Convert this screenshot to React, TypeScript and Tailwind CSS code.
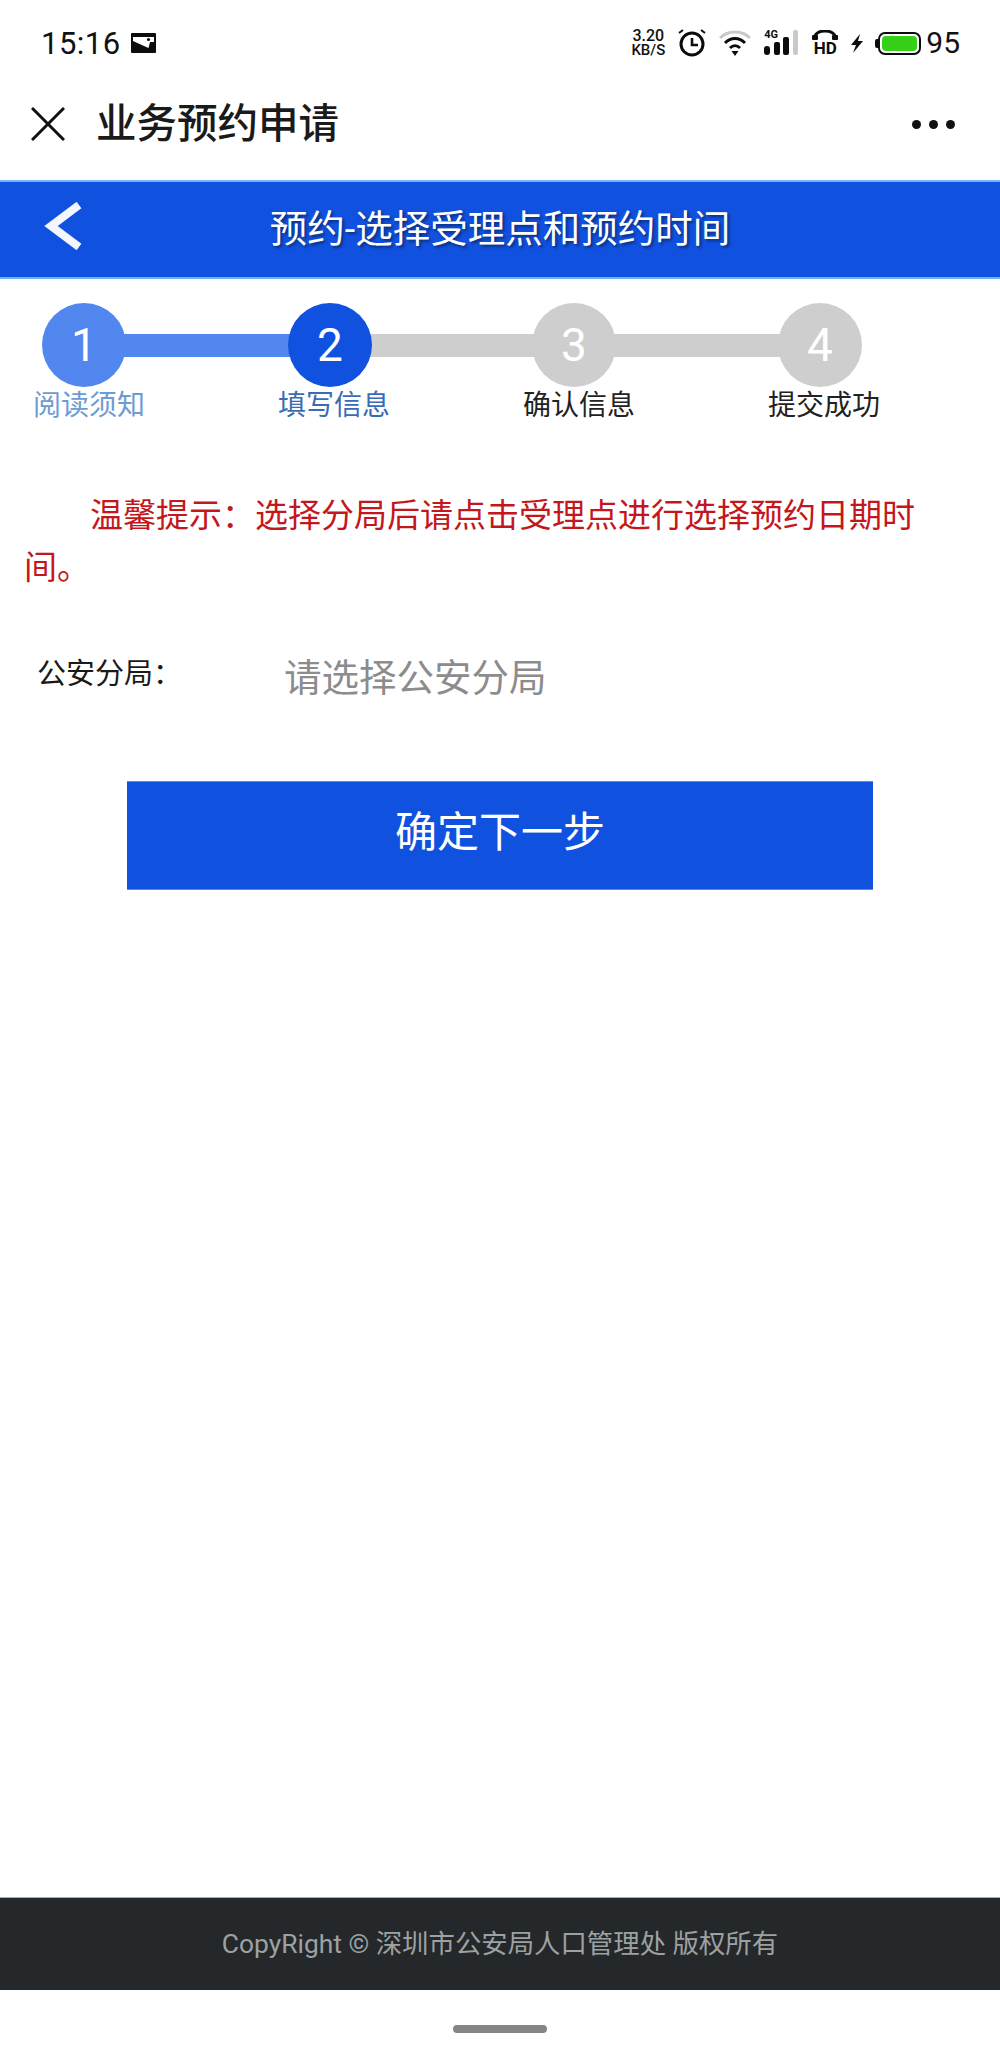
const cjk = "font-['Roboto','Noto_Sans_CJK_SC','Noto_Sans',sans-serif]";

const steps = [
  { n: "1", label: "阅读须知", circle: "bg-[#5287ef]", text: "text-[#6e9bd3]", bar: "" },
  { n: "2", label: "填写信息", circle: "bg-[#1151df]", text: "text-[#3a6bb5]", bar: "w-[174px] bg-[#5287ef]" },
  { n: "3", label: "确认信息", circle: "bg-[#cdcecd]", text: "text-[#222222]", bar: "w-[172px] bg-[#cdcecd]" },
  { n: "4", label: "提交成功", circle: "bg-[#cdcecd]", text: "text-[#222222]", bar: "w-[174px] bg-[#cdcecd]" },
];

function MailIcon() {
  return (
    <svg width="25" height="20" viewBox="0 0 25 20">
      <rect width="25" height="20" rx="1" fill="#0c0c0c" />
      <path d="M2 4 H23 V9 H19 L17.5 15 L13 13 L2 8 Z" fill="#fff" />
      <circle cx="17.5" cy="6.5" r="1.6" fill="#0c0c0c" />
    </svg>
  );
}

function StatusIcons() {
  return (
    <div className="flex items-center">
      <div className="flex flex-col items-center whitespace-nowrap text-[#111] font-['Roboto',sans-serif] font-medium">
        <span className="text-[16px] leading-[14px]">3.20</span>
        <span className="text-[15px] leading-[14px]">KB/S</span>
      </div>
      <svg className="ml-[13px]" width="28" height="28" viewBox="0 0 28 28" fill="none" stroke="#0c0c0c">
        <circle cx="14" cy="15" r="11" strokeWidth="3" />
        <path d="M14 9 V16 H20" strokeWidth="2.6" />
        <path d="M1 4 L5 1 M27 4 L23 1" strokeWidth="2" />
      </svg>
      <svg className="ml-[13px]" width="32" height="26" viewBox="0 0 32 26" fill="none">
        <path d="M1 8 C9 0 23 0 31 8" stroke="#c9c9c9" strokeWidth="3" />
        <path d="M6 13 C12 7 20 7 26 13" stroke="#0c0c0c" strokeWidth="3" />
        <path d="M11 18 C14 15 18 15 21 18" stroke="#0c0c0c" strokeWidth="3" />
        <path d="M12.5 21 L16 26 L19.5 21 Z" fill="#0c0c0c" />
      </svg>
      <div className="relative ml-[13px] h-[26px] w-[34px]">
        <span className="absolute left-0 top-[-1px] text-[11px] font-bold leading-[12px] text-[#0c0c0c] font-['Roboto',sans-serif]">4G</span>
        <svg width="34" height="26" viewBox="0 0 34 26">
          <rect x="0" y="16" width="6" height="9" rx="3" fill="#0c0c0c" />
          <rect x="10" y="12" width="6" height="13" rx="2" fill="#0c0c0c" />
          <rect x="19" y="7" width="6" height="18" rx="2" fill="#0c0c0c" />
          <rect x="29" y="0" width="5" height="25" rx="2" fill="#c9c9c9" />
        </svg>
      </div>
      <div className="ml-[14px] flex w-[26px] flex-col items-center">
        <svg width="26" height="11" viewBox="0 0 26 11" fill="none">
          <path d="M3 9 V7 C3 -1 23 -1 23 7 V9" stroke="#0c0c0c" strokeWidth="3" />
          <rect x="0" y="5" width="6" height="5" rx="1" fill="#0c0c0c" />
          <rect x="20" y="5" width="6" height="5" rx="1" fill="#0c0c0c" />
        </svg>
        <span className="text-[17px] font-bold leading-[15px] text-[#0c0c0c] font-['Roboto',sans-serif]">HD</span>
      </div>
      <svg className="ml-[12px]" width="14" height="19" viewBox="0 0 14 19">
        <path d="M10 0 L1 11 H6 L3 19 L13 7 H8 Z" fill="#0c0c0c" />
      </svg>
      <div className="ml-[11px] flex items-center">
        <div className="h-[9px] w-[3px] rounded-l-[2px] bg-[#0c0c0c]" />
        <div className="flex h-[23px] w-[43px] items-center rounded-[7px] border-2 border-[#0c0c0c] p-[2px]">
          <div className="h-full w-full rounded-[4px] bg-[#35d017]" />
        </div>
      </div>
      <span className="ml-[5px] text-[30px] leading-none text-[#111] font-['Roboto',sans-serif]">95</span>
    </div>
  );
}

export default function App() {
  return (
    <div className={`flex h-[2066px] w-[1000px] flex-col bg-white ${cjk}`}>
      {/* status bar */}
      <div className="flex h-[86px] items-center justify-between pl-[41px] pr-[40px]">
        <div className="flex items-center gap-[10px]">
          <span className="text-[31px] leading-none tracking-[0.5px] text-[#111]">15:16</span>
          <MailIcon />
        </div>
        <StatusIcons />
      </div>

      {/* wechat nav */}
      <div className="flex h-[94px] items-center pb-[18px] pl-[31px] pr-[45px]">
        <svg width="34" height="34" viewBox="0 0 34 34" fill="none" stroke="#111" strokeWidth="3">
          <path d="M1 1 L33 33 M33 1 L1 33" />
        </svg>
        <span className="ml-[31px] text-[40.5px] font-medium leading-none text-[#1a1a1a]">业务预约申请</span>
        <div className="ml-auto flex gap-[8px]">
          <div className="h-[9px] w-[9px] rounded-full bg-[#111]" />
          <div className="h-[9px] w-[9px] rounded-full bg-[#111]" />
          <div className="h-[9px] w-[9px] rounded-full bg-[#111]" />
        </div>
      </div>

      {/* blue header */}
      <div className="relative flex h-[99px] items-center justify-center border-t-2 border-b-2 border-t-[#7db4f3] border-b-[#6fb3f2] bg-[#1151df]">
        <svg className="absolute left-[42px] top-[20px]" width="41" height="48" viewBox="0 0 41 48">
          <path d="M37 3 L9 24 L37 45" fill="none" stroke="#f4f6fd" strokeWidth="8" />
        </svg>
        <span className="text-[37.5px] leading-none text-white [text-shadow:2px_2px_3px_rgba(0,0,0,0.45)]">预约-选择受理点和预约时间</span>
      </div>

      {/* steps */}
      <div className="mt-[24px] flex items-center pl-[42px]">
        {steps.map((s, i) => (
          <div key={s.n} className="flex items-center">
            {i > 0 && <div className={`-mx-[6px] h-[23px] ${s.bar}`} />}
            <div className={`relative flex h-[84px] w-[84px] items-center justify-center rounded-full text-[46px] leading-none text-white ${s.circle}`}>
              {s.n}
            </div>
          </div>
        ))}
      </div>
      <div className="flex gap-[133px] pl-[33px] pt-[1px]">
        {steps.map((s) => (
          <span key={s.n} className={`w-[112px] whitespace-nowrap text-center text-[28px] leading-[36px] ${s.text}`}>
            {s.label}
          </span>
        ))}
      </div>

      {/* tip */}
      <p className="mt-[66px] box-content w-[905px] pl-[24px] text-[33px] leading-[52px] text-[#c4171c] [text-indent:66px]">
        {"温馨提示\uFF1A选择分局后请点击受理点进行选择预约日期时间。"}
      </p>

      {/* form row */}
      <div className="mt-[66px] flex items-center pl-[37px]">
        <span className="-mt-[8px] w-[247px] text-[29px] leading-none text-[#1a1a1a]">{"公安分局\uFF1A"}</span>
        <span className="text-[37.5px] leading-none text-[#8c8c8c]">请选择公安分局</span>
      </div>

      {/* submit */}
      <div className="mt-[83px] flex justify-center">
        <button className="flex h-[109px] w-[746px] items-center justify-center border-t border-b border-[#5b8eea] bg-[#1151df] pb-[4px] text-[42px] leading-none text-white">
          确定下一步
        </button>
      </div>

      {/* footer */}
      <div className="mt-auto flex h-[93px] items-center justify-center border-t border-[#a9abab] bg-[#24282b] text-[26.4px] leading-none text-[#9da1a2]">
        CopyRight © 深圳市公安局人口管理处 版权所有
      </div>
      <div className="flex h-[76px] justify-center pt-[35px]">
        <div className="h-[8px] w-[94px] rounded-full bg-[#858585]" />
      </div>
    </div>
  );
}
